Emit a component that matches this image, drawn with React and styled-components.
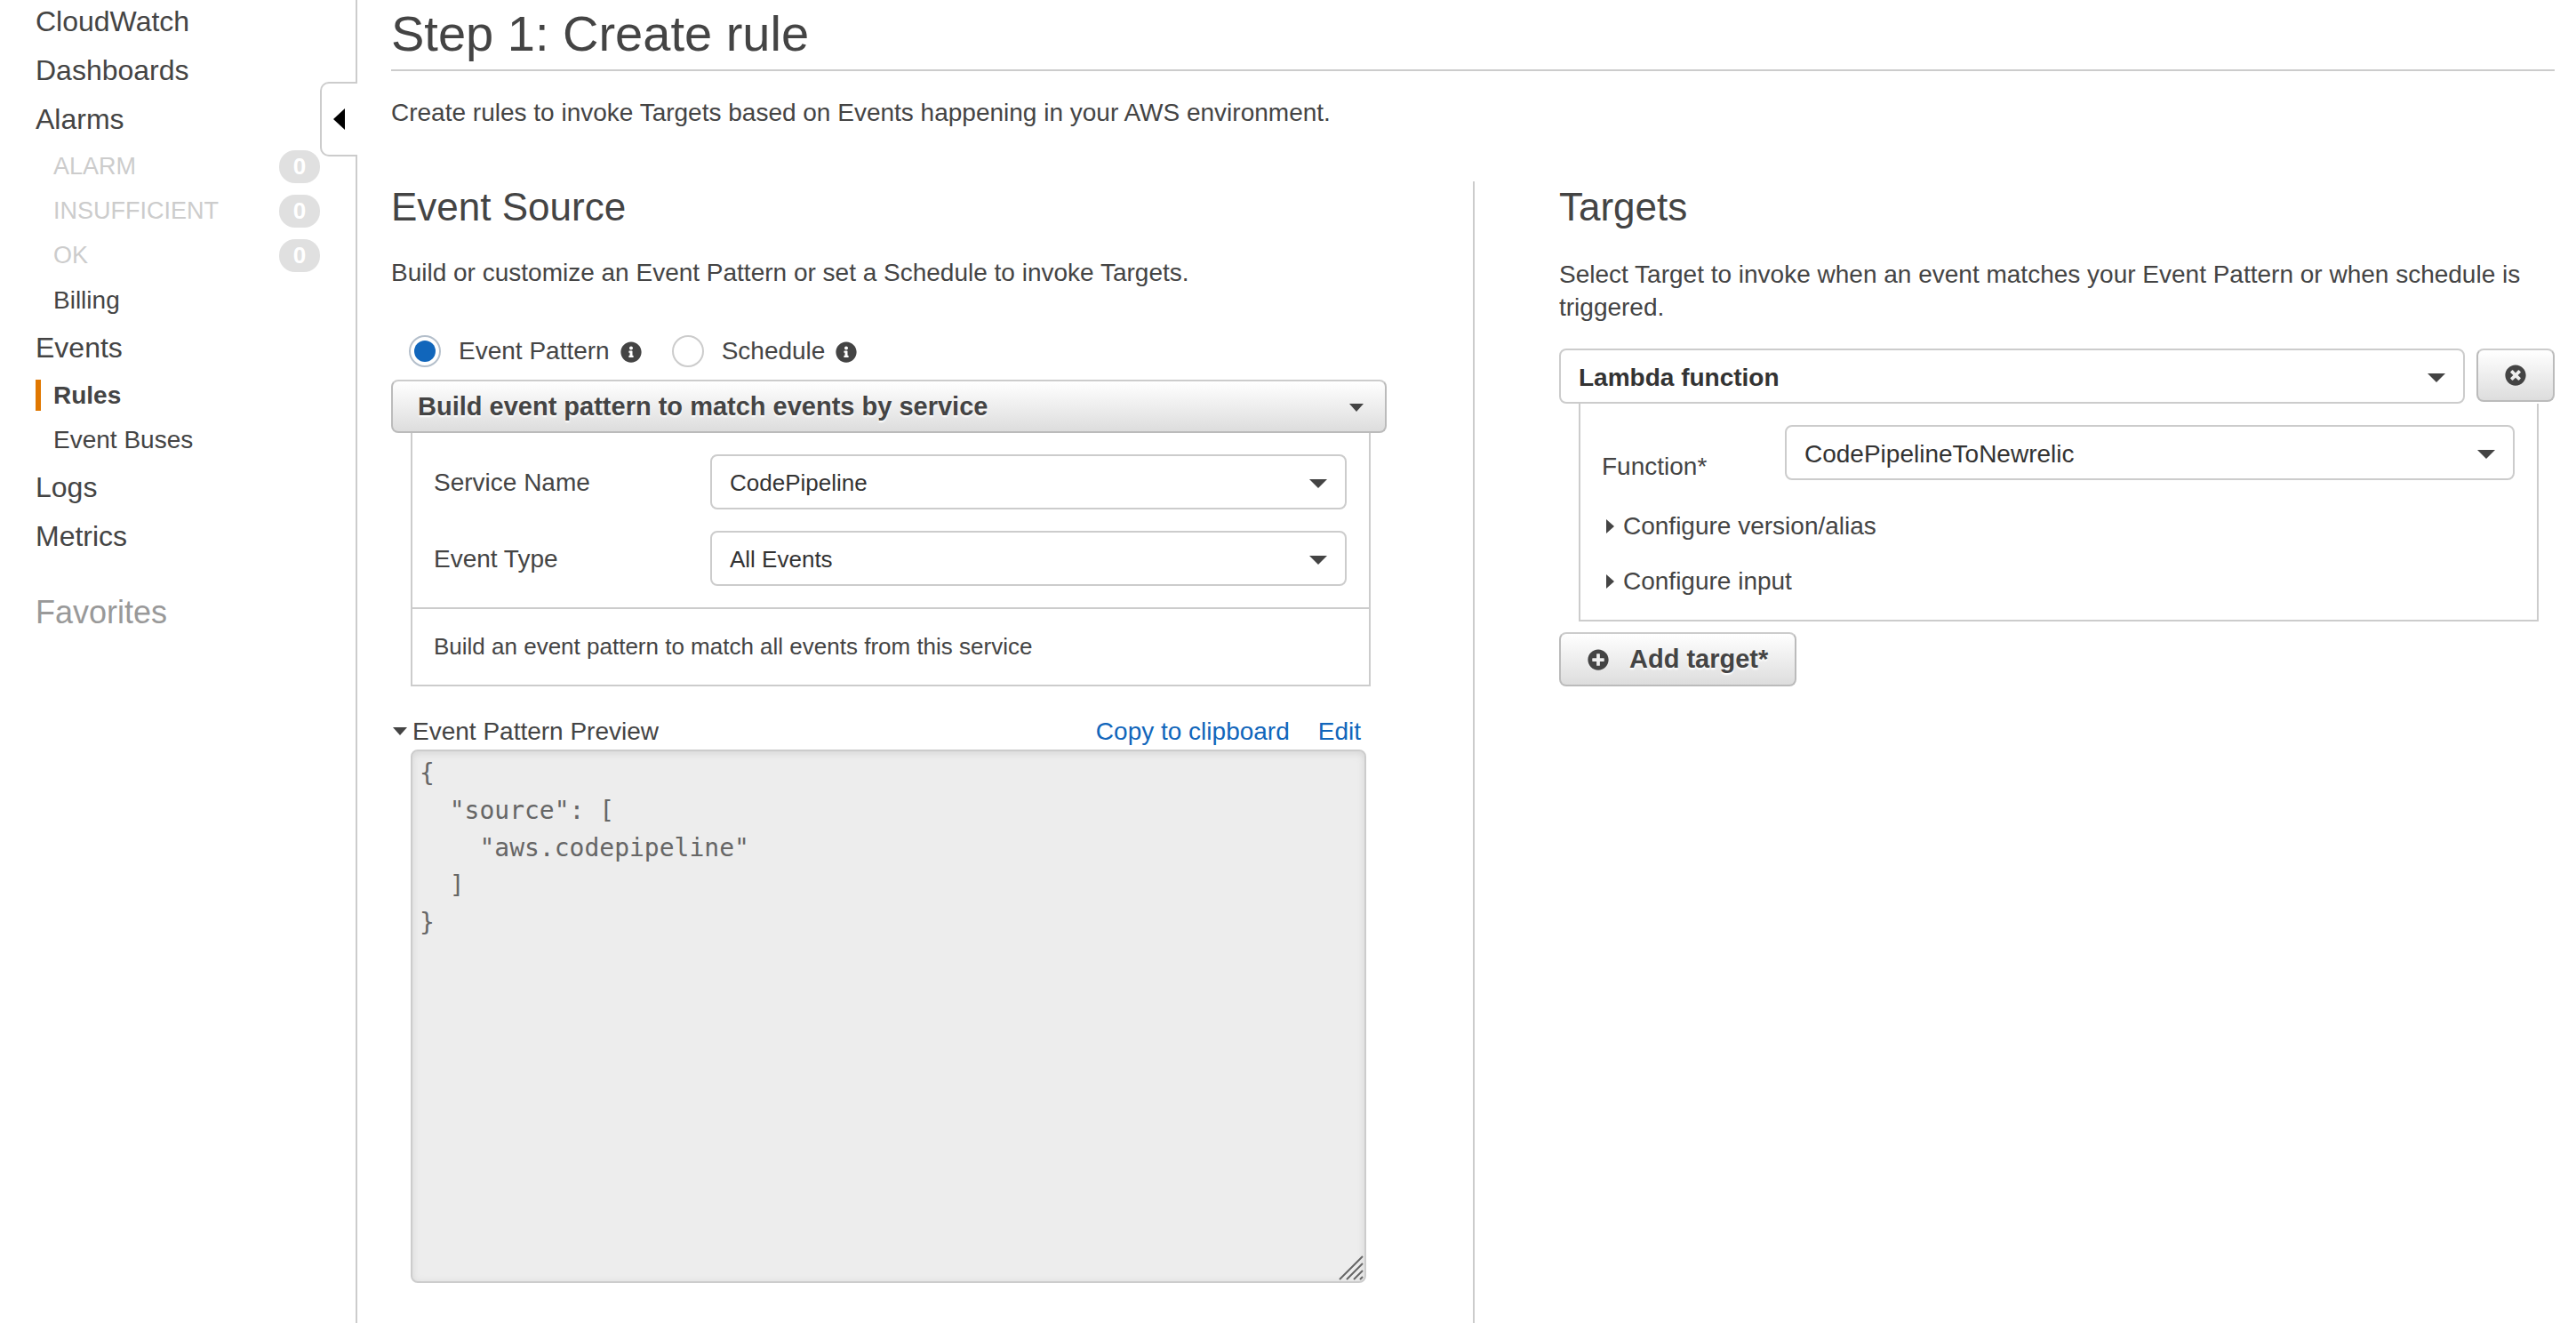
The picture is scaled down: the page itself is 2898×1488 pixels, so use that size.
import React, { useState } from "react";
import styled, { createGlobalStyle, css } from "styled-components";
import { FaInfoCircle, FaPlusCircle, FaTimesCircle } from "react-icons/fa";

const GlobalStyle = createGlobalStyle`
  *, *::before, *::after { box-sizing: border-box; }
  body {
    margin: 0;
    background: #fff;
    color: #444;
    font-family: "Liberation Sans", Arial, Helvetica, sans-serif;
    font-size: 28px;
    line-height: 37px;
  }
  h1, h2, p, ul { margin: 0; padding: 0; }
  ul { list-style: none; }
  button, select, textarea, input { font: inherit; color: inherit; margin: 0; }
  a { text-decoration: none; }
`;

const Page = styled.div`
  display: flex;
  min-height: 100vh;
`;

const Sidebar = styled.nav`
  position: relative;
  flex: none;
  width: 402px;
  padding: 6px 40px 0 40px;
  border-right: 2px solid #ccc;
`;

const NavList = styled.ul`
  display: flex;
  flex-direction: column;
  gap: 18px;
`;

const NavLink = styled.a`
  display: block;
  font-size: 32px;
  color: #444;
`;

const SubList = styled.ul`
  display: flex;
  flex-direction: column;
  gap: 15px;
  margin-top: 17px;
`;

const SubItem = styled.li`
  display: flex;
  align-items: center;
  justify-content: space-between;
  height: 35px;
`;

const SubLink = styled.a`
  padding-left: 14px;
  border-left: 6px solid ${(p) => (p.$active ? "#e07700" : "transparent")};
  font-size: ${(p) => (p.$muted ? 27 : 28)}px;
  line-height: 35px;
  font-weight: ${(p) => (p.$active ? "bold" : "normal")};
  color: ${(p) => (p.$muted ? "#ccc" : "#444")};
`;

const Badge = styled.span`
  flex: none;
  width: 46px;
  border-radius: 18px;
  background: #e0e0e0;
  color: #fff;
  font-size: 26px;
  font-weight: bold;
  text-align: center;
`;

const Favorites = styled.h2`
  margin-top: 46px;
  font-size: 36px;
  line-height: 42px;
  font-weight: normal;
  color: #999;
`;

const CollapseTab = styled.button`
  position: absolute;
  top: 92px;
  right: -2px;
  display: flex;
  align-items: center;
  width: 42px;
  height: 84px;
  padding: 0 0 0 13px;
  border: 2px solid #ccc;
  border-right: 0;
  border-radius: 10px 0 0 10px;
  background: #fff;
  color: #000;
`;

const Main = styled.main`
  display: flex;
  flex: 1;
  flex-direction: column;
  min-width: 0;
  padding: 6px 24px 0 38px;
`;

const Title = styled.h1`
  padding-bottom: 8px;
  border-bottom: 2px solid #ccc;
  font-size: 56px;
  line-height: 64px;
  font-weight: normal;
`;

const Intro = styled.p`
  margin: 28px 0 59px;
`;

const Columns = styled.div`
  display: grid;
  flex: 1;
  grid-template-columns: 1fr 1fr;
`;

const SourceColumn = styled.section`
  min-width: 0;
  padding: 4px 97px 0 0;
`;

const TargetsColumn = styled.section`
  min-width: 0;
  padding: 4px 0 0 95px;
  border-left: 2px solid #ccc;
`;

const SectionTitle = styled.h2`
  font-size: 44px;
  line-height: 50px;
  font-weight: normal;
`;

const Description = styled.p`
  margin-top: ${(p) => p.$space}px;
`;

const RadioRow = styled.div`
  display: flex;
  align-items: center;
  gap: 34px;
  height: 36px;
  margin: 52px 0 14px;
  padding-left: 20px;
`;

const RadioOption = styled.div`
  display: flex;
  align-items: center;
`;

const Radio = styled.input`
  appearance: none;
  width: 36px;
  height: 36px;
  padding: 4px;
  border: 2px solid #ccc;
  border-radius: 50%;
  background: #fff;

  &:checked {
    border-color: #b4bfcb;
    background: #1166bb content-box;
  }
`;

const RadioLabel = styled.label`
  padding: 0 12px 2px 20px;
`;

const IconButton = styled.button`
  display: flex;
  padding: 2px 0 0;
  border: 0;
  background: none;
`;

const raised = css`
  border: 2px solid #bbb;
  border-top-color: #ccc;
  border-radius: 8px;
  background: linear-gradient(#fff, #eee 50%, #ddd);
  font-size: 29px;
  text-shadow: 0 2px 2px #fff;
`;

const SelectBox = styled.div`
  position: relative;
  flex: 1;
  min-width: 0;

  &::after {
    content: "";
    position: absolute;
    top: ${(p) => (p.$raised ? 27 : 28)}px;
    right: ${(p) => (p.$raised ? 26 : 22)}px;
    border: solid transparent;
    border-width: ${(p) => (p.$raised ? "9px 8px 0" : "10px 10px 0")};
    border-top-color: #444;
    pointer-events: none;
  }
`;

const SelectControl = styled.select`
  display: block;
  appearance: none;
  width: 100%;
  height: 62px;
  padding: 2px 56px 0 20px;
  border: 2px solid #ccc;
  border-radius: 8px;
  background: #fff;
  color: #333;
  font-size: ${(p) => (p.$compact ? 26 : 28)}px;
  font-weight: ${(p) => (p.$bold ? "bold" : "normal")};

  ${(p) =>
    p.$raised &&
    css`
      ${raised}
      height: 60px;
      padding: 0 56px 0 28px;
      color: #444;
    `}
`;

const Panel = styled.div`
  margin: 0 18px 0 22px;
  border: 2px solid #ccc;
  border-top: 0;
`;

const PanelBody = styled.div`
  display: flex;
  flex-direction: column;
  gap: 24px;
  padding: 24px 25px 24px 24px;
`;

const PanelNote = styled.p`
  padding: 24px;
  border-top: 2px solid #ccc;
  font-size: 26px;
`;

const Field = styled.div`
  display: flex;
  align-items: center;
`;

const FieldLabel = styled.label`
  flex: none;
  width: 311px;
`;

const PreviewHeader = styled.div`
  display: flex;
  align-items: center;
  justify-content: space-between;
  margin: 32px 29px 2px 2px;
`;

const Toggle = styled.button`
  display: flex;
  align-items: center;
  gap: ${(p) => p.$gap}px;
  padding: 0;
  border: 0;
  background: none;
`;

const Actions = styled.div`
  display: flex;
  gap: 32px;
`;

const ActionLink = styled.a`
  color: #1166bb;
`;

const PreviewBox = styled.div`
  position: relative;
  margin: 0 23px 0 22px;
`;

const Preview = styled.textarea`
  display: block;
  width: 100%;
  padding: 4px 8px;
  border: 2px solid #ccc;
  border-radius: 8px;
  background: #ededed;
  box-shadow: inset 0 2px 8px #d4d4d4;
  color: #666;
  font-family: "DejaVu Sans Mono", Menlo, monospace;
  line-height: 42px;
  resize: none;
`;

const Grip = styled.svg`
  position: absolute;
  right: 3px;
  bottom: 3px;
  width: 28px;
  height: 28px;
`;

const TargetHeader = styled.div`
  display: flex;
  gap: 13px;
  margin-top: 28px;
`;

const RemoveButton = styled.button`
  ${raised}
  display: flex;
  align-items: center;
  justify-content: center;
  flex: none;
  width: 88px;
  height: 60px;
  padding: 0;
`;

const TargetBody = styled.div`
  padding: 24px 25px 25px 24px;
`;

const TargetField = styled.div`
  display: flex;
  margin-bottom: 30px;
`;

const TargetLabel = styled.label`
  flex: none;
  width: 206px;
  padding-top: 28px;
`;

const ToggleList = styled.div`
  display: flex;
  flex-direction: column;
  gap: 25px;
  padding-left: 5px;
`;

const AddButton = styled.button`
  ${raised}
  display: inline-flex;
  align-items: center;
  gap: 23px;
  height: 61px;
  margin-top: 12px;
  padding: 0 30px;
  font-weight: bold;
`;

function Triangle({ direction, width, height }) {
  const points = {
    left: `${width},0 ${width},${height} 0,${height / 2}`,
    right: `0,0 ${width},${height / 2} 0,${height}`,
    down: `0,0 ${width},0 ${width / 2},${height}`,
  }[direction];
  return (
    <svg width={width} height={height} aria-hidden="true">
      <polygon points={points} fill="currentColor" />
    </svg>
  );
}

function Select({ id, label, value, raised: isRaised, bold, compact }) {
  return (
    <SelectBox $raised={isRaised}>
      <SelectControl
        id={id}
        aria-label={label}
        $raised={isRaised}
        $bold={bold}
        $compact={compact}
      >
        <option>{value}</option>
      </SelectControl>
    </SelectBox>
  );
}

const pattern = `{
  "source": [
    "aws.codepipeline"
  ]
}`;

const navigation = [
  { name: "CloudWatch" },
  { name: "Dashboards" },
  {
    name: "Alarms",
    children: [
      { name: "ALARM", count: 0 },
      { name: "INSUFFICIENT", count: 0 },
      { name: "OK", count: 0 },
      { name: "Billing" },
    ],
  },
  {
    name: "Events",
    children: [{ name: "Rules", active: true }, { name: "Event Buses" }],
  },
  { name: "Logs" },
  { name: "Metrics" },
];

function Navigation() {
  return (
    <Sidebar aria-label="CloudWatch">
      <NavList>
        {navigation.map((item) => (
          <li key={item.name}>
            <NavLink href="#">{item.name}</NavLink>
            {item.children && (
              <SubList>
                {item.children.map((child) => (
                  <SubItem key={child.name}>
                    <SubLink
                      href="#"
                      $active={child.active}
                      $muted={child.count === 0}
                    >
                      {child.name}
                    </SubLink>
                    {child.count !== undefined && <Badge>{child.count}</Badge>}
                  </SubItem>
                ))}
              </SubList>
            )}
          </li>
        ))}
      </NavList>
      <Favorites>Favorites</Favorites>
      <CollapseTab type="button" aria-label="Collapse navigation">
        <Triangle direction="left" width={13} height={24} />
      </CollapseTab>
    </Sidebar>
  );
}

export default function App() {
  const [mode, setMode] = useState("pattern");
  return (
    <>
      <GlobalStyle />
      <Page>
        <Navigation />
        <Main>
          <Title>Step 1: Create rule</Title>
          <Intro>
            Create rules to invoke Targets based on Events happening in your AWS
            environment.
          </Intro>
          <Columns>
            <SourceColumn>
              <SectionTitle>Event Source</SectionTitle>
              <Description $space={30}>
                Build or customize an Event Pattern or set a Schedule to invoke
                Targets.
              </Description>
              <RadioRow>
                <RadioOption>
                  <Radio
                    type="radio"
                    name="mode"
                    id="mode-pattern"
                    checked={mode === "pattern"}
                    onChange={() => setMode("pattern")}
                  />
                  <RadioLabel htmlFor="mode-pattern">Event Pattern</RadioLabel>
                  <IconButton type="button" aria-label="About event patterns">
                    <FaInfoCircle size={24} />
                  </IconButton>
                </RadioOption>
                <RadioOption>
                  <Radio
                    type="radio"
                    name="mode"
                    id="mode-schedule"
                    checked={mode === "schedule"}
                    onChange={() => setMode("schedule")}
                  />
                  <RadioLabel htmlFor="mode-schedule">Schedule</RadioLabel>
                  <IconButton type="button" aria-label="About schedules">
                    <FaInfoCircle size={24} />
                  </IconButton>
                </RadioOption>
              </RadioRow>
              <Select
                label="Pattern type"
                value="Build event pattern to match events by service"
                raised
                bold
              />
              <Panel>
                <PanelBody>
                  <Field>
                    <FieldLabel htmlFor="service">Service Name</FieldLabel>
                    <Select id="service" value="CodePipeline" compact />
                  </Field>
                  <Field>
                    <FieldLabel htmlFor="event-type">Event Type</FieldLabel>
                    <Select id="event-type" value="All Events" compact />
                  </Field>
                </PanelBody>
                <PanelNote>
                  Build an event pattern to match all events from this service
                </PanelNote>
              </Panel>
              <PreviewHeader>
                <Toggle type="button" $gap={6} aria-expanded="true">
                  <Triangle direction="down" width={16} height={9} />
                  Event Pattern Preview
                </Toggle>
                <Actions>
                  <ActionLink href="#">Copy to clipboard</ActionLink>
                  <ActionLink href="#">Edit</ActionLink>
                </Actions>
              </PreviewHeader>
              <PreviewBox>
                <Preview
                  rows={14}
                  readOnly
                  value={pattern}
                  aria-label="Event Pattern Preview"
                />
                <Grip viewBox="0 0 28 28" aria-hidden="true">
                  <path
                    d="M1 27 27 1M9 27 27 9M17 27 27 17M24 27 27 24"
                    stroke="#666"
                    strokeWidth="2"
                  />
                </Grip>
              </PreviewBox>
            </SourceColumn>
            <TargetsColumn>
              <SectionTitle>Targets</SectionTitle>
              <Description $space={32}>
                Select Target to invoke when an event matches your Event Pattern
                or when schedule is triggered.
              </Description>
              <TargetHeader>
                <Select label="Target type" value="Lambda function" bold />
                <RemoveButton type="button" aria-label="Remove target">
                  <FaTimesCircle size={24} />
                </RemoveButton>
              </TargetHeader>
              <Panel>
                <TargetBody>
                  <TargetField>
                    <TargetLabel htmlFor="function">Function*</TargetLabel>
                    <Select id="function" value="CodePipelineToNewrelic" />
                  </TargetField>
                  <ToggleList>
                    <Toggle type="button" $gap={10} aria-expanded="false">
                      <Triangle direction="right" width={9} height={16} />
                      Configure version/alias
                    </Toggle>
                    <Toggle type="button" $gap={10} aria-expanded="false">
                      <Triangle direction="right" width={9} height={16} />
                      Configure input
                    </Toggle>
                  </ToggleList>
                </TargetBody>
              </Panel>
              <AddButton type="button">
                <FaPlusCircle size={24} />
                Add target*
              </AddButton>
            </TargetsColumn>
          </Columns>
        </Main>
      </Page>
    </>
  );
}
